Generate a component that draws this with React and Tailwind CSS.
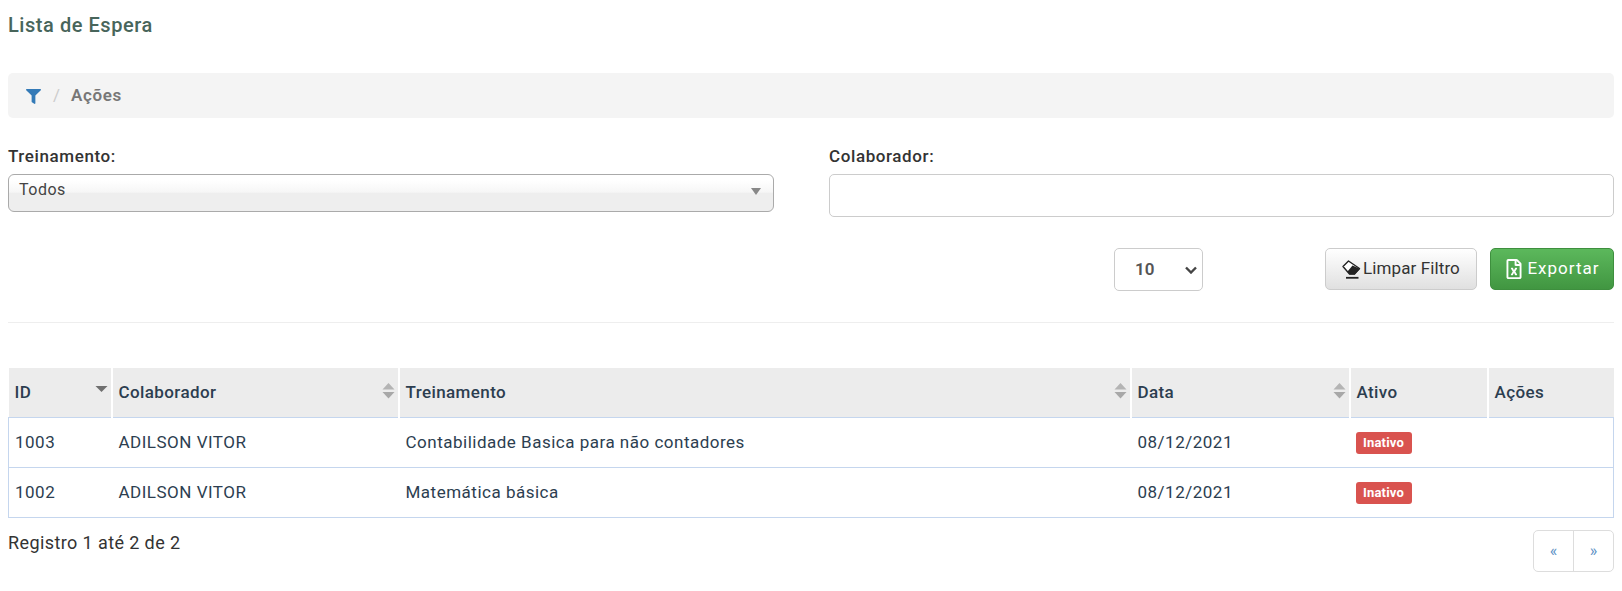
import React from "react";
import { FaFilter, FaRegFileExcel } from "react-icons/fa";

function SortIcon({ mode }) {
  return (
    <svg width="13" height="16" viewBox="0 0 13 16" className="absolute right-[3px] top-[15px]">
      {mode === "both" && <path d="M6.5 0L12.5 6.5H.5z" fill="#b4b4b4" />}
      <path d={mode === "both" ? "M.5 9H12.5L6.5 15.5z" : "M.5 3H12.5L6.5 9z"} fill={mode === "both" ? "#a8a8a8" : "#6f6f6f"} />
    </svg>
  );
}

function Eraser() {
  return (
    <svg width="19" height="19" viewBox="0 0 19 19" className="mr-[2px]">
      <path d="M1 6.5L6.5 1L17.5 8.5L12.5 14H7.5z" fill="#fff" stroke="#222" strokeWidth="1.4" strokeLinejoin="round" />
      <path d="M5.5 11.5L10.5 5.5L18 8.7L12.8 14.6H7.5z" fill="#222" />
      <path d="M4 17.8H16.5" stroke="#222" strokeWidth="1.8" />
    </svg>
  );
}

const headers = [
  { t: "ID", w: "w-[103px]", s: "desc" },
  { t: "Colaborador", w: "w-[287px]", s: "both" },
  { t: "Treinamento", w: "w-[732px]", s: "both" },
  { t: "Data", w: "w-[219px]", s: "both" },
  { t: "Ativo", w: "w-[138px]" },
  { t: "Ações", w: "" },
];
const rows = [
  ["1003", "ADILSON VITOR", "Contabilidade Basica para não contadores", "08/12/2021"],
  ["1002", "ADILSON VITOR", "Matemática básica", "08/12/2021"],
];

export default function App() {
  return (
    <div className="h-[591px] w-[1622px] overflow-hidden bg-white px-2 font-['Roboto',sans-serif] text-[#333]">
      <h1 className="pt-[15px] text-[20px] leading-[20px] font-medium tracking-[0.55px] text-[#48655b]">Lista de Espera</h1>
      <div className="mt-[38px] flex h-[45px] items-center rounded-[5px] bg-[#f4f4f4] pl-[18px] pt-[1px] text-[17px]">
        <FaFilter className="text-[15px] text-[#337ab7]" />
        <span className="ml-[12px] text-[#ccc]">/</span>
        <span className="ml-[11px] font-semibold tracking-[0.6px] text-[#777]">Ações</span>
      </div>
      <div className="mt-[27px] flex">
        <div className="w-[766px]">
          <label className="block text-[17px] leading-[23px] font-medium tracking-[0.6px]">Treinamento:</label>
          <div className="relative mt-[6px] h-[38px] rounded-[6px] border border-[#aaa] bg-[linear-gradient(#fff_15%,#f6f6f6_48%,#eee_50%,#eee_100%)] pl-[10px] text-[16px] leading-[30px] tracking-[0.5px] text-[#444]">
            Todos
            <span className="absolute right-[12px] top-[13px] h-0 w-0 border-x-[5px] border-t-[7px] border-x-transparent border-t-[#888]"></span>
          </div>
        </div>
        <div className="ml-[55px] flex-1">
          <label className="block text-[17px] leading-[23px] font-medium tracking-[0.6px]">Colaborador:</label>
          <input className="mt-[6px] block h-[43px] w-full rounded-[5px] border border-[#ccc] bg-white" />
        </div>
      </div>
      <div className="mt-[31px] flex items-start">
        <div className="relative ml-[1106px] flex h-[43px] w-[89px] items-center rounded-[5px] border border-[#ccc] pl-[20px] text-[17px] font-semibold text-[#555]">
          10
          <svg width="12" height="8" viewBox="0 0 12 8" className="absolute right-[5px] top-[17px]">
            <path d="M1 1.5L6 6.5L11 1.5" fill="none" stroke="#444" strokeWidth="2.4" />
          </svg>
        </div>
        <button className="ml-[122px] flex h-[42px] w-[152px] items-center justify-center rounded-[5px] border border-[#ccc] bg-[linear-gradient(#fff,#e0e0e0)] text-[17px] tracking-[0.1px] text-[#333]">
          <Eraser />
          Limpar Filtro
        </button>
        <button className="ml-[13px] flex h-[42px] w-[124px] items-center justify-center rounded-[5px] border border-[#3e8f3e] bg-[linear-gradient(#5cb85c,#419641)] text-[17px] tracking-[1px] text-white">
          <FaRegFileExcel className="mr-[3px] text-[20px]" />
          Exportar
        </button>
      </div>
      <hr className="mt-[31px] border-t border-[#eee]" />
      <table className="mt-[45px] w-full table-fixed border-collapse text-[17px] tracking-[0.5px] text-[#2c3e50]">
        <thead>
          <tr className="h-[49px] bg-[#ececec]">
            {headers.map((h) => (
              <th key={h.t} className={`${h.w} relative border-r-2 border-white pl-[6px] text-left text-[17px] font-medium tracking-[0.4px] last:border-r-0`}>
                {h.t}
                {h.s && <SortIcon mode={h.s} />}
              </th>
            ))}
          </tr>
        </thead>
        <tbody>
          {rows.map((r) => (
            <tr key={r[0]} className="h-[50px] border border-[#c5d6ee]">
              <td className="pl-[6px] pt-[1px]">{r[0]}</td>
              <td className="pl-[7px] pt-[1px]">{r[1]}</td>
              <td className="pl-[7px] pt-[1px]">{r[2]}</td>
              <td className="pl-[7px] pt-[1px]">{r[3]}</td>
              <td className="pl-[6px]">
                <span className="inline-block h-[22px] w-[56px] rounded-[3px] bg-[#d9534f] text-center align-middle text-[13px] leading-[22px] font-bold tracking-[0.2px] text-white">Inativo</span>
              </td>
              <td></td>
            </tr>
          ))}
        </tbody>
      </table>
      <div className="flex items-start justify-between">
        <div className="mt-[13px] text-[18px] leading-[23px] tracking-[0.4px]">Registro 1 até 2 de 2</div>
        <div className="mt-[12px] flex h-[42px] w-[81px] rounded-[5px] border border-[#ddd] text-[16px] text-[#5a8fc4]">
          <span className="flex flex-1 items-center justify-center border-r border-[#ddd]">«</span>
          <span className="flex flex-1 items-center justify-center">»</span>
        </div>
      </div>
    </div>
  );
}
